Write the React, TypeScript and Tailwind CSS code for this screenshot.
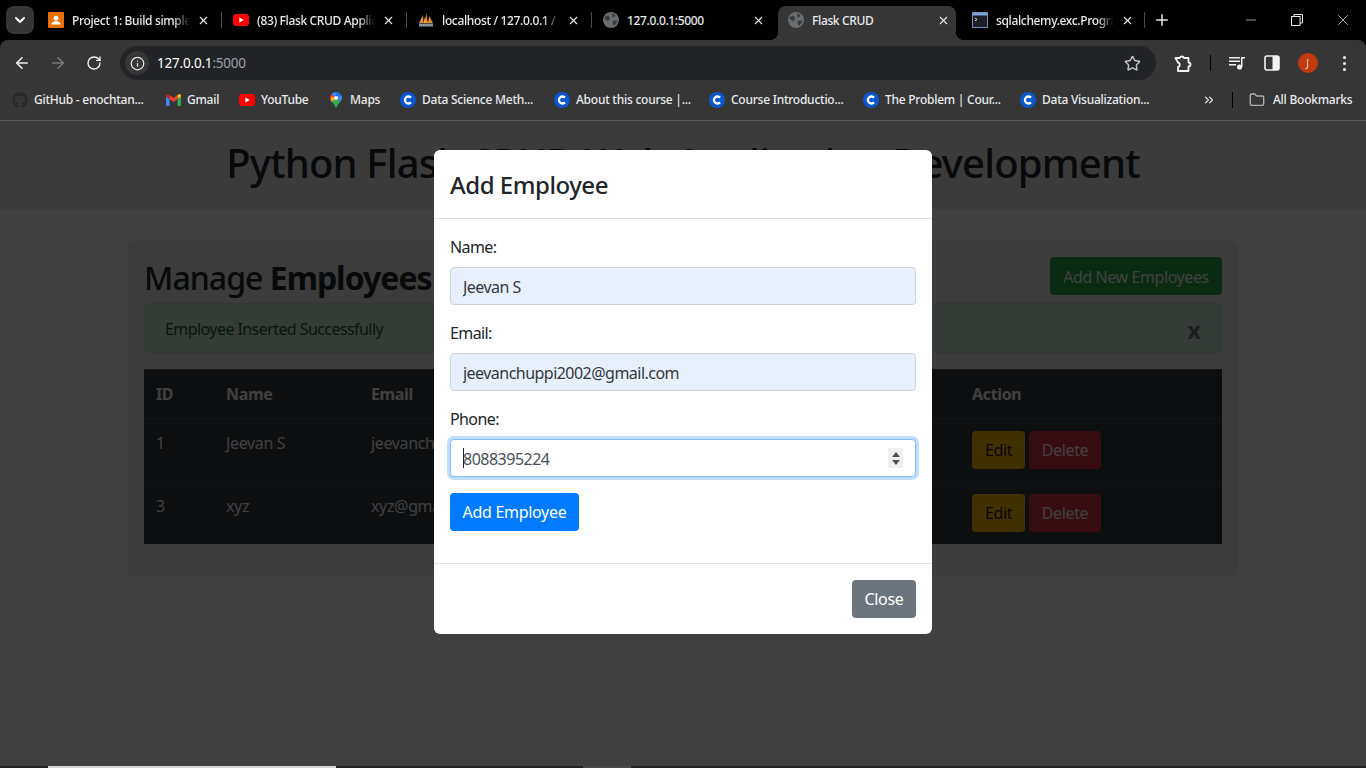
import { ArrowLeft, ArrowRight, ChevronDown, ChevronsRight, Folder, Info, Minus, Plus, RotateCw, Star, X } from "lucide-react";
import { FaGithub } from "react-icons/fa";
import type { ReactNode } from "react";

const YoutubeIcon = () => (
  <svg width="16" height="12" viewBox="0 0 16 12">
    <rect width="16" height="12" rx="3" fill="#ff0000" />
    <path d="M6.3 3.4v5.2L10.8 6z" fill="#fff" />
  </svg>
);

const GlobeIcon = () => (
  <svg width="16" height="16" viewBox="0 0 16 16">
    <circle cx="8" cy="8" r="8" fill="#696c70" />
    <path d="M1.500 5 5 3.500 7 5.500 6.500 8 4.500 9 1.500 6.500zM9 1.500l3.500 1.200-1 2.300-2 .3zM9.500 9l4-.8.800 1.300-2.800 4-1.500-.7z" fill="#3a3b3e" />
  </svg>
);

const ClassroomIcon = () => (
  <svg width="16" height="16" viewBox="0 0 16 16">
    <rect width="16" height="16" rx="1" fill="#e8710a" />
    <circle cx="8" cy="6.2" r="2.4" fill="#fff" />
    <path d="M3.5 11.5c.6-1.6 2.6-2.2 4.5-2.2s3.900.6 4.500 2.200v1H3.500z" fill="#fff" />
  </svg>
);

const PmaIcon = () => (
  <svg width="16" height="16" viewBox="0 0 16 16">
    <path d="M1 11 5 3l.6 8zM6.400 11 8.300 1l1.500 10zM10.500 11l.6-7 3.900 7z" fill="#e8892c" />
    <path d="M5.600 11 7 5l.6 6zM9.300 11l1-4 .4 4z" fill="#f6c04a" />
    <rect x="1" y="11.500" width="14" height="3" fill="#8a8f9c" />
  </svg>
);

const TerminalIcon = () => (
  <svg width="16" height="16" viewBox="0 0 16 16">
    <rect x="0.500" y="0.500" width="15" height="15" fill="#1c1f26" stroke="#6e8fc0" />
    <rect x="1" y="1" width="14" height="2.500" fill="#7fa3d6" />
    <path d="M3 6l2 1.500L3 9" stroke="#d8d8d8" fill="none" />
  </svg>
);

const GmailIcon = () => (
  <svg width="15" height="12" viewBox="0 0 15 12">
    <path d="M0 2v9a1 1 0 0 0 1 1h2.500V5z" fill="#4285f4" />
    <path d="M15 2v9a1 1 0 0 1-1 1h-2.500V5z" fill="#34a853" />
    <path d="M11.500 1v4L15 2.500V1.500C15 .4 13.700-.3 12.800.4z" fill="#fbbc04" />
    <path d="M3.500 5V1l4 3 4-3v4l-4 3z" fill="#ea4335" />
    <path d="M0 1.500v1L3.500 5V1L2.200.4C1.300-.3 0 .4 0 1.500z" fill="#c5221f" />
  </svg>
);

const MapsIcon = () => (
  <svg width="12" height="16" viewBox="0 0 12 16">
    <path d="M6 0a6 6 0 0 0-4.600 2.200L6 6z" fill="#4285f4" />
    <path d="M6 0a6 6 0 0 1 5.300 3.200L6 6z" fill="#1a73e8" />
    <path d="M11.300 3.200A6 6 0 0 1 10.600 9.500L6 6z" fill="#4285f4" />
    <path d="M1.400 2.200A6 6 0 0 0 1.300 9.600L6 6z" fill="#ea4335" />
    <path d="M1.300 9.600 6 6l4.600 3.500L8 12.500 6 16l-1.800-3.200z" fill="#34a853" />
    <path d="M1.400 9.700 6 6 1 5z" fill="#fbbc04" />
    <circle cx="6" cy="6" r="2.100" fill="#fff" />
  </svg>
);

const CourseraIcon = () => (
  <svg width="16" height="16" viewBox="0 0 16 16">
    <circle cx="8" cy="8" r="8" fill="#0b57d0" />
    <path d="M11 5.600A3.500 3.500 0 1 0 11 10.400" fill="none" stroke="#fff" strokeWidth="2.300" />
  </svg>
);

const ExtensionIcon = () => (
  <svg width="20" height="20" viewBox="0 0 20 20" fill="none" stroke="#f1f3f4" strokeWidth="1.800" strokeLinejoin="round">
    <path d="M2.500 5h4.200a2.300 2.300 0 0 1 4.300 0h4.500v4.500a2 2 0 0 1 0 4V18H5v-4a2.300 2.300 0 0 0 0-4.500L2.500 5z" />
  </svg>
);

const MediaIcon = () => (
  <svg width="16" height="14" viewBox="0 0 16 14" fill="#f1f3f4">
    <rect x="0" y="1" width="11" height="1.500" />
    <rect x="0" y="4.500" width="11" height="1.500" />
    <rect x="0" y="8" width="7" height="1.500" />
    <circle cx="10.500" cy="11" r="2.600" />
    <rect x="12" y="1" width="1.500" height="10" />
    <rect x="12" y="1" width="4" height="1.500" />
  </svg>
);

const SidePanelIcon = () => (
  <svg width="16" height="16" viewBox="0 0 16 16">
    <rect x="1" y="1" width="14" height="14" rx="2" fill="none" stroke="#f1f3f4" strokeWidth="1.600" />
    <rect x="8.500" y="1" width="6.500" height="14" rx="1" fill="#f1f3f4" />
  </svg>
);

const RestoreIcon = () => (
  <svg width="12" height="12" viewBox="0 0 12 12" fill="none" stroke="#e8e8e8">
    <rect x="0.500" y="2.500" width="8.500" height="9" />
    <path d="M3 2.500V.5h8.500v8.500H9" />
  </svg>
);

type TabInfo = { icon: ReactNode; title: string; width: string; active?: boolean; sep?: boolean; fade?: boolean };

const tabs: TabInfo[] = [
  { icon: <ClassroomIcon />, title: "Project 1: Build simple Flask App", width: "w-[185px]", sep: true, fade: true },
  { icon: <YoutubeIcon />, title: "(83) Flask CRUD Application", width: "w-[185px]", sep: true, fade: true },
  { icon: <PmaIcon />, title: "localhost / 127.0.0.1 / crud", width: "w-[185px]", sep: true, fade: true },
  { icon: <GlobeIcon />, title: "127.0.0.1:5000", width: "w-[185px]" },
  { icon: <GlobeIcon />, title: "Flask CRUD", width: "w-[184px]", active: true },
  { icon: <TerminalIcon />, title: "sqlalchemy.exc.ProgrammingError", width: "w-[184px]", sep: true, fade: true },
];

function joinClasses(...parts: (string | false | undefined)[]) {
  return parts.filter(Boolean).join(" ");
}

const Tab = ({ icon, title, width, active, sep, fade }: TabInfo) => (
  <div className={`relative flex h-[34px] shrink-0 items-center pb-[6px] ${width}`}>
    {active && (
      <>
        <div className="absolute inset-y-0 left-[1px] right-[5px] rounded-t-lg bg-[#363636]" />
        <div className="absolute bottom-0 left-[-7px] h-2 w-2 bg-[radial-gradient(circle_at_0_0,transparent_8px,#363636_8px)]" />
        <div className="absolute bottom-0 right-[-3px] h-2 w-2 bg-[radial-gradient(circle_at_100%_0,transparent_8px,#363636_8px)]" />
      </>
    )}
    <div className="relative ml-[11px] flex h-4 w-4 shrink-0 items-center justify-center">{icon}</div>
    <span
      className={joinClasses(
        "relative ml-2 w-[118px] overflow-hidden whitespace-nowrap pt-[1px] text-[12px] font-medium tracking-[-0.35px] text-[#e8eaed]",
        fade && "[mask-image:linear-gradient(to_right,black_86%,transparent)]",
      )}
    >
      {title}
    </span>
    <X size={13} strokeWidth={2} className="relative ml-[7px] shrink-0 text-[#e8eaed]" />
    {sep && <div className="absolute right-0 top-[6px] h-[16px] w-px bg-[#4d4d4d]" />}
  </div>
);

const TabStrip = () => (
  <div className="flex h-10 items-end bg-black">
    <div className="mb-[6px] ml-[6px] flex h-7 w-7 items-center justify-center rounded-lg bg-[#363636]">
      <ChevronDown size={16} strokeWidth={3} className="text-white" />
    </div>
    <div className="ml-[3px] flex">
      {tabs.map((tab) => (
        <Tab key={tab.title} {...tab} />
      ))}
    </div>
    <div className="mb-[6px] flex h-7 items-center">
      <Plus size={18} strokeWidth={2} className="ml-2 text-[#e8eaed]" />
    </div>
    <div className="ml-auto flex h-10 items-center text-[#e8e8e8]">
      <div className="flex w-[46px] justify-center"><Minus size={16} strokeWidth={1} /></div>
      <div className="flex w-[46px] justify-center"><RestoreIcon /></div>
      <div className="flex w-[46px] justify-center"><X size={18} strokeWidth={1} /></div>
    </div>
  </div>
);

const Toolbar = () => (
  <div className="flex h-10 items-start rounded-t-lg bg-[#363636] pl-1 text-[#f1f3f4]">
    <div className="flex h-[46px] w-9 items-center justify-center"><ArrowLeft size={18} strokeWidth={2} /></div>
    <div className="flex h-[46px] w-9 items-center justify-center text-[#7a7a7a]"><ArrowRight size={18} strokeWidth={2} /></div>
    <div className="flex h-[46px] w-9 items-center justify-center"><RotateCw size={16} strokeWidth={2} /></div>
    <div className="ml-2 mt-[6px] flex h-[34px] w-[1036px] items-center rounded-full bg-[#222326]">
      <div className="ml-[5px] flex h-6 w-6 items-center justify-center rounded-full bg-[#363636]">
        <Info size={15} strokeWidth={2} className="text-[#e8eaed]" />
      </div>
      <span className="ml-2 text-[13.5px] tracking-[-0.2px] text-white">
        127.0.0.1<span className="text-[#9aa0a6]">:5000</span>
      </span>
      <Star size={17} strokeWidth={2} className="ml-auto mr-[15px] text-[#c4c7c5]" />
    </div>
    <div className="ml-[9px] flex h-[46px] w-9 items-center justify-center"><ExtensionIcon /></div>
    <div className="flex h-[46px] w-[18px] items-center justify-center"><div className="h-4 w-px bg-black" /></div>
    <div className="flex h-[46px] w-9 items-center justify-center"><MediaIcon /></div>
    <div className="flex h-[46px] w-[34px] items-center justify-center"><SidePanelIcon /></div>
    <div className="flex h-[46px] w-[37px] items-center justify-center">
      <div className="flex h-5 w-5 items-center justify-center rounded-full bg-[#c0390f] text-[10px] text-[#f5d5c5]">J</div>
    </div>
    <div className="flex h-[46px] w-9 flex-col items-center justify-center gap-[3px]">
      <div className="h-[3px] w-[3px] rounded-full bg-[#f1f3f4]" />
      <div className="h-[3px] w-[3px] rounded-full bg-[#f1f3f4]" />
      <div className="h-[3px] w-[3px] rounded-full bg-[#f1f3f4]" />
    </div>
  </div>
);

const bookmarks: { icon: ReactNode; label: string; width: string; gap: string }[] = [
  { icon: <FaGithub size={16} className="text-[#24292f]" />, label: "GitHub - enochtan...", width: "w-[154px]", gap: "ml-[6px]" },
  { icon: <GmailIcon />, label: "Gmail", width: "w-[73px]", gap: "ml-[6px]" },
  { icon: <YoutubeIcon />, label: "YouTube", width: "w-[91px]", gap: "ml-[6px]" },
  { icon: <MapsIcon />, label: "Maps", width: "w-[70px]", gap: "ml-[8px]" },
  { icon: <CourseraIcon />, label: "Data Science Meth...", width: "w-[154px]", gap: "ml-[6px]" },
  { icon: <CourseraIcon />, label: "About this course |...", width: "w-[155px]", gap: "ml-[6px]" },
  { icon: <CourseraIcon />, label: "Course Introductio...", width: "w-[154px]", gap: "ml-[6px]" },
  { icon: <CourseraIcon />, label: "The Problem | Cour...", width: "w-[157px]", gap: "ml-[6px]" },
  { icon: <CourseraIcon />, label: "Data Visualization...", width: "w-[150px]", gap: "ml-[6px]" },
];

const BookmarksBar = () => (
  <div className="flex h-[41px] items-center border-b border-[#5c5c5c] bg-[#363636] pl-3 text-[12px] font-medium tracking-[-0.25px] text-[#e8eaed]">
    {bookmarks.map((b) => (
      <div key={b.label} className={`flex shrink-0 items-center ${b.width}`}>
        {b.icon}
        <span className={`${b.gap} whitespace-nowrap`}>{b.label}</span>
      </div>
    ))}
    <ChevronsRight size={14} strokeWidth={2} className="ml-[32px]" />
    <div className="ml-[16px] h-4 w-px bg-black" />
    <Folder size={16} strokeWidth={2} className="ml-[16px] text-[#aeb1b5]" />
    <span className="ml-2 whitespace-nowrap">All Bookmarks</span>
  </div>
);

const employees = [
  { id: 1, name: "Jeevan S", email: "jeevanchuppi2002@gmail.com", phone: "8088395224" },
  { id: 3, name: "xyz", email: "xyz@gmail.com", phone: "1234567890" },
];

const thClass = "border-t border-[#454d55] px-3 py-3 font-bold";
const tdClass = "border-t border-[#454d55] px-3 py-3 align-top";

const Page = () => (
  <div>
    <div className="flex h-[88px] items-center justify-center bg-[#e9ecef] pb-1">
      <h1 className="whitespace-nowrap text-[40px] font-medium tracking-[-0.82px] text-[#212529]">
        Python Flask CRUD Web Application Development
      </h1>
    </div>
    <div className="mx-[128px] mt-8 rounded-md bg-[#f0f0f0] p-4">
      <div className="flex items-start justify-between">
        <h2 className="mb-1 text-[32px] font-medium leading-[42px] tracking-[-0.98px] text-[#212529]">
          Manage <b className="font-bold">Employees</b>
        </h2>
        <button className="h-[38px] w-[172px] rounded bg-[#28a745] pt-[1px] text-base tracking-[-0.42px] text-white">Add New Employees</button>
      </div>
      <div className="mb-4 flex h-[50px] items-center justify-between rounded border border-[#c3e6cb] bg-[#d4edda] pl-5 pr-5 pt-[2px] text-[#155724]">
        <span className="text-base tracking-[-0.57px]">Employee Inserted Successfully</span>
        <span className="mt-[2px] text-2xl font-bold text-black/50">x</span>
      </div>
      <table className="mb-4 w-full table-fixed border-separate border-spacing-0 bg-[#343a40] text-left text-base tracking-[-0.35px] text-white">
        <thead>
          <tr>
            <th className={`${thClass} w-[70px]`}>ID</th>
            <th className={`${thClass} w-[145px]`}>Name</th>
            <th className={`${thClass} w-[300px]`}>Email</th>
            <th className={`${thClass} w-[301px]`}>Phone</th>
            <th className={thClass}>Action</th>
          </tr>
        </thead>
        <tbody>
          {employees.map((e) => (
            <tr key={e.id}>
              <td className={tdClass}>{e.id}</td>
              <td className={tdClass}>{e.name}</td>
              <td className={tdClass}>{e.email}</td>
              <td className={tdClass}>{e.phone}</td>
              <td className={tdClass}>
                <div className="flex gap-1">
                  <button className="h-[38px] w-[53px] rounded bg-[#ffc107] text-[#212529]">Edit</button>
                  <button className="h-[38px] w-[72px] rounded bg-[#dc3545] text-white">Delete</button>
                </div>
              </td>
            </tr>
          ))}
        </tbody>
      </table>
    </div>
  </div>
);

const fieldClass =
  "block h-[38px] w-full rounded border border-[#ced4da] bg-[#e8f0fe] px-3 pt-[2px] text-base tracking-[-0.53px] text-[#33383d] outline-none";
const labelClass = "mb-2 block text-base leading-6 tracking-[-0.6px]";

const Modal = () => (
  <div className="absolute inset-0 flex justify-center bg-black/75 pt-[29px]">
    <div className="h-[484px] w-[498px] rounded-md bg-white text-[#212529]">
      <div className="border-b border-[#dee2e6] p-4">
        <h5 className="h-9 text-2xl font-medium leading-[38px] tracking-[-0.47px]">Add Employee</h5>
      </div>
      <form className="border-b border-[#e3e6e9] px-4 pb-8 pt-4">
        <label className={labelClass}>Name:</label>
        <input readOnly value="Jeevan S" className={`${fieldClass} mb-4`} />
        <label className={labelClass}>Email:</label>
        <input readOnly value="jeevanchuppi2002@gmail.com" className={`${fieldClass} mb-4`} />
        <label className={labelClass}>Phone:</label>
        <div className="relative mb-4">
          <input
            readOnly
            value="8088395224"
            className="block h-[38px] w-full rounded border border-[#80bdff] bg-white px-3 pt-[2px] text-base tracking-[-0.5px] text-[#495057] shadow-[0_0_0_3px_rgba(0,123,255,0.25)] outline-none"
          />
          <div className="absolute left-[13px] top-[9px] h-5 w-px bg-[#212529]" />
          <div className="absolute right-[13px] top-[9px] flex h-5 w-[15px] flex-col items-center justify-center gap-[3px] bg-[#f0f0f0]">
            <svg width="8" height="5" viewBox="0 0 8 5"><path d="M4 0l4 5H0z" fill="#505050" /></svg>
            <svg width="8" height="5" viewBox="0 0 8 5"><path d="M0 0h8L4 5z" fill="#505050" /></svg>
          </div>
        </div>
        <button type="button" className="h-[38px] w-[129px] rounded bg-[#007bff] text-base tracking-[-0.3px] text-white">Add Employee</button>
      </form>
      <div className="flex justify-end p-4">
        <button className="h-[38px] w-16 rounded bg-[#6c757d] text-base tracking-[-0.3px] text-white">Close</button>
      </div>
    </div>
  </div>
);

export default function App() {
  return (
    <div className="flex h-[768px] w-[1366px] flex-col overflow-hidden bg-black font-['Noto_Sans',sans-serif]">
      <TabStrip />
      <Toolbar />
      <BookmarksBar />
      <div className="relative flex-1 overflow-hidden bg-white">
        <Page />
        <Modal />
      </div>
      <div className="flex h-[2px] shrink-0 bg-[#222222]">
        <div className="ml-12 w-[288px] bg-[#d4d4d4]" />
        <div className="ml-[247px] w-12 bg-[#4a4a4a]" />
      </div>
    </div>
  );
}
